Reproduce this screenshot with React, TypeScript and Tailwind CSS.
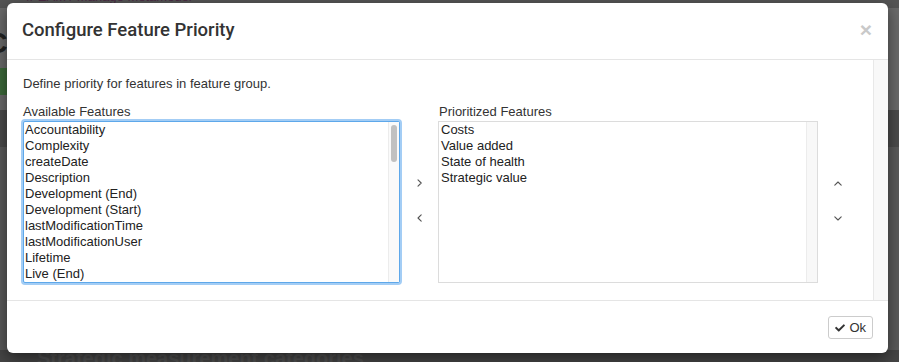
import React from "react";
import { FaCheck } from "react-icons/fa";

const available = [
  "Accountability",
  "Complexity",
  "createDate",
  "Description",
  "Development (End)",
  "Development (Start)",
  "lastModificationTime",
  "lastModificationUser",
  "Lifetime",
  "Live (End)",
];
const prioritized = ["Costs", "Value added", "State of health", "Strategic value"];

function Chevron({ dir }: { dir: "left" | "right" | "up" | "down" }) {
  const horiz = dir === "up" || dir === "down";
  const d = {
    right: "M1 0.8 L4.2 4 L1 7.2",
    left: "M4.2 0.8 L1 4 L4.2 7.2",
    up: "M0.8 4.2 L4 1 L7.2 4.2",
    down: "M0.8 0.8 L4 4 L7.2 0.8",
  }[dir];
  return (
    <svg width={horiz ? 8 : 5} height={horiz ? 5 : 8} viewBox={horiz ? "0 0 8 5" : "0 0 5 8"}>
      <path d={d} fill="none" stroke="#555" strokeWidth="1.1" strokeLinecap="round" strokeLinejoin="round" />
    </svg>
  );
}

export default function App() {
  return (
    <div className="relative w-[899px] h-[362px] overflow-hidden bg-[#5c5c5c] font-['Liberation_Sans',Arial,sans-serif] text-[#333]">
      {/* underlying page (dimmed by the overlay) */}
      <div className="flex flex-col h-full">
        <div className="h-[8px] bg-[#555] pl-[27px] text-[13px] leading-[6px] text-[#4a2a44] overflow-hidden whitespace-nowrap">
          <span className="relative top-[-6px]">// EAM / Manage Metamodel</span>
        </div>
        <div className="h-[102px] bg-[#6a6a6a] flex flex-col pt-[18px]">
          <div className="text-[30px] leading-[34px] font-bold text-[#222] -ml-[14px]">C</div>
          <div className="mt-[8px] w-[7px] h-[27px] bg-[#3d6a3a]" />
        </div>
        <div className="h-[37px] bg-[#4b4b4b]" />
        <div className="flex-1 bg-[#5a5a5a]" />
        <div className="h-[12px] bg-[#454545] pl-[37px] text-[20px] font-bold leading-[16px] text-[#515151] whitespace-nowrap overflow-hidden">
          Strategic measurement categories
        </div>
      </div>

      {/* modal dialog */}
      <div className="absolute left-[7px] top-[3px] w-[881px] h-[350px] rounded-[6px] bg-white shadow-[0_5px_15px_rgba(0,0,0,0.5)] flex flex-col overflow-hidden">
        <div className="h-[57px] border-b border-[#e5e5e5] flex items-center justify-between pl-[15px] pr-[16px]">
          <div className="text-[18.5px] font-medium font-['Roboto',sans-serif] text-[#333]">Configure Feature Priority</div>
          <div className="text-[21px] font-bold leading-none text-[#c9c9c9] -mt-[3px]">×</div>
        </div>

        <div className="h-[240px] flex">
          <div className="flex-1 pl-[16px] pr-[15px] pt-[15px] text-[13px]">
            <div className="leading-[17px] mb-[11px]">Define priority for features in feature group.</div>
            <div className="grid grid-cols-[377px_38px_380px_40px]">
              <div className="leading-[17px]">Available Features</div>
              <div />
              <div className="leading-[17px] pl-[1px]">Prioritized Features</div>
              <div />

              <div className="mt-[1px] h-[162px] border border-[#5ea8ea] rounded-[2px] shadow-[0_0_0_2px_#a3cdf5] flex bg-white">
                <div className="flex-1 pl-[1px] leading-[16px] text-[#222]">
                  {available.map((a) => (
                    <div key={a}>{a}</div>
                  ))}
                </div>
                <div className="w-[11px] border-l border-[#ececec] bg-[#fafafa] flex justify-center pt-[3px]">
                  <div className="w-[6px] h-[37px] rounded-full bg-[#c1c1c1]" />
                </div>
              </div>

              <div className="flex flex-col items-center justify-center gap-[27px] pb-[2px]">
                <Chevron dir="right" />
                <Chevron dir="left" />
              </div>

              <div className="mt-[1px] h-[162px] border border-[#dcdcdc] flex bg-white">
                <div className="flex-1 pl-[2px] leading-[16px] text-[#222]">
                  {prioritized.map((a) => (
                    <div key={a}>{a}</div>
                  ))}
                </div>
                <div className="w-[11px] border-l border-[#ececec] bg-[#f8f8f8]" />
              </div>

              <div className="flex flex-col items-center justify-center gap-[30px] pb-[2px]">
                <Chevron dir="up" />
                <Chevron dir="down" />
              </div>
            </div>
          </div>
          <div className="w-[15px] bg-[#f8f8f8] border-l border-[#e8e8e8]" />
        </div>

        <div className="flex-1 border-t border-[#e5e5e5] flex justify-end items-start pt-[15px] pr-[15px]">
          <button className="h-[23px] px-[6px] flex items-center gap-[4px] border border-[#ccc] rounded-[3px] bg-white text-[13px] text-[#333]">
            <FaCheck className="w-[10px] h-[10px] text-[#333]" />
            <span>Ok</span>
          </button>
        </div>
      </div>
    </div>
  );
}
